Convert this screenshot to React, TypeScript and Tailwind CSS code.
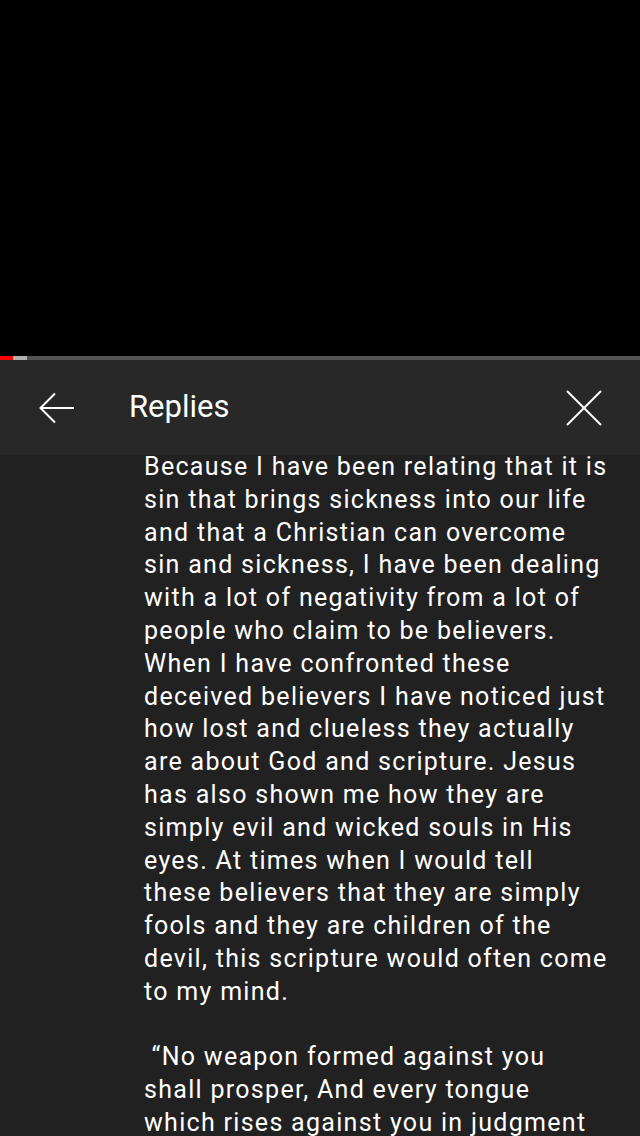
import React from "react";

const lines1 = [
  "Because I have been relating that it is",
  "sin that brings sickness into our life",
  "and that a Christian can overcome",
  "sin and sickness, I have been dealing",
  "with a lot of negativity from a lot of",
  "people who claim to be believers.",
  "When I have confronted these",
  "deceived believers I have noticed just",
  "how lost and clueless they actually",
  "are about God and scripture. Jesus",
  "has also shown me how they are",
  "simply evil and wicked souls in His",
  "eyes. At times when I would tell",
  "these believers that they are simply",
  "fools and they are children of the",
  "devil, this scripture would often come",
  "to my mind.",
];

const lines2 = [
  "\u00a0\u201CNo weapon formed against you",
  "shall prosper, And every tongue",
  "which rises against you in judgment",
  "You shall condemn.",
];

export default function App() {
  return (
    <div
      className="w-[640px] h-[1136px] overflow-hidden bg-black flex flex-col"
      style={{ fontFamily: "Roboto, 'Liberation Sans', sans-serif" }}
    >
      <div className="h-[356px] bg-black shrink-0" />
      <div className="h-[4px] flex shrink-0 bg-[#545454]">
        <div className="w-[13px] bg-[#ff0000]" />
        <div className="w-[14px] bg-[#b0b0b0]" />
      </div>
      <div className="h-[95px] bg-[#282828] flex items-center shrink-0 relative z-10">
        <div className="w-[129px] flex items-center pl-[39px]">
          <svg width="36" height="32" viewBox="0 0 36 32" fill="none" stroke="#ffffff" strokeWidth="2">
            <path d="M35 16H2" />
            <path d="M16 1.5L1.5 16L16 30.5" />
          </svg>
        </div>
        <div className="text-white text-[31px] leading-none flex-1 pb-[2px]">Replies</div>
        <div className="pr-[38px]">
          <svg width="36" height="36" viewBox="0 0 36 36" fill="none" stroke="#ffffff" strokeWidth="2">
            <path d="M1 1L35 35" />
            <path d="M35 1L1 35" />
          </svg>
        </div>
      </div>
      <div className="flex-1 bg-[#212121] overflow-hidden">
        <div className="pl-[144px] mt-[-4px] text-white text-[25px] tracking-[1.3px] leading-[32.8px] whitespace-nowrap">
          {lines1.map((l, i) => (
            <div key={i}>{l}</div>
          ))}
          <div>&nbsp;</div>
          {lines2.map((l, i) => (
            <div key={"b" + i}>{l}</div>
          ))}
        </div>
      </div>
    </div>
  );
}
